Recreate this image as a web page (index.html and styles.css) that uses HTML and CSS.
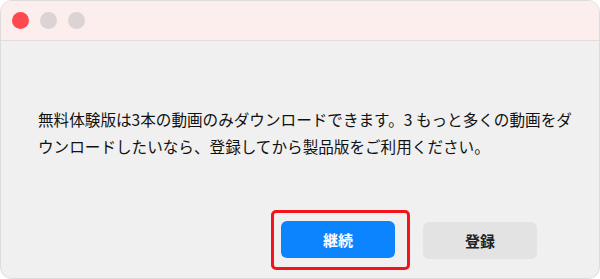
FILE: index.html
```html
<!DOCTYPE html>
<html lang="ja">
<head>
    <meta charset="UTF-8">
    <meta name="viewport" content="width=device-width, initial-scale=1.0">
    <title>試用版</title>
    <link rel="stylesheet" href="styles.css">
</head>
<body>

    <div class="window">
        <!-- Title bar -->
        <div class="titlebar">
            <span class="dot dot-close"></span>
            <span class="dot"></span>
            <span class="dot"></span>
        </div>

        <!-- Dialog body -->
        <div class="content">
            <p class="message">無料体験版は3本の動画のみダウンロードできます。3 もっと多くの動画をダウンロードしたいなら、登録してから製品版をご利用ください。</p>

            <div class="actions">
                <div class="highlight">
                    <button class="button button-primary">継続</button>
                </div>
                <button class="button button-secondary">登録</button>
            </div>
        </div>
    </div>

</body>
</html>
```

FILE: styles.css
```css
* {
    margin: 0;
    padding: 0;
    box-sizing: border-box;
    font-family: 'Noto Sans CJK JP', 'Noto Sans', sans-serif;
}
body {
    width: 600px;
    height: 279px;
    background: #fff;
    overflow: hidden;
}
.window {
    width: 600px;
    height: 279px;
    border: 1px solid #dcdcdc;
    border-radius: 12px;
    overflow: hidden;
    background: #f0f0f0;
}
.titlebar {
    height: 40px;
    background: #fdeeee;
    border-bottom: 1px solid #e4dcdc;
    display: flex;
    align-items: center;
    gap: 11px;
    padding-left: 11px;
}
.dot {
    width: 17px;
    height: 17px;
    border-radius: 50%;
    background: #dcd3d4;
}
.dot-close {
    background: #fe4a4f;
}
.content {
    padding: 65px 18px 0 37px;
}
.message {
    font-size: 15.6px;
    line-height: 27px;
    color: #111;
}
.actions {
    display: flex;
    justify-content: flex-end;
    align-items: center;
    gap: 13px;
    margin-top: 50px;
    margin-right: 44px;
}
.highlight {
    border: 3px solid #f5121a;
    border-radius: 5px;
    padding: 8px 12px 9px 7px;
}
.button {
    width: 114px;
    height: 37px;
    border: none;
    border-radius: 6px;
    font-size: 15px;
    font-weight: bold;
    cursor: pointer;
}
.button-primary {
    background: #0b84fe;
    color: #fff;
}
.button-secondary {
    background: #e3e3e3;
    color: #222;
}
```
